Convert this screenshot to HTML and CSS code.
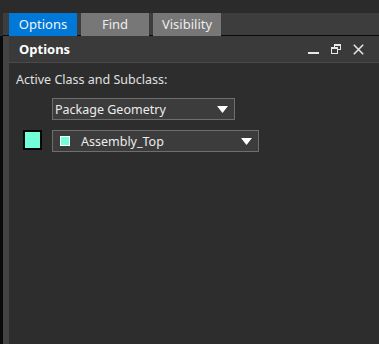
FILE: index.html
```html
<!DOCTYPE html>
<html>
<head>
<meta charset="utf-8">
<link rel="stylesheet" href="styles.css">
</head>
<body>
<div class="app">
  <div class="topgap"></div>
  <div class="tabrow">
    <div class="edge-top"></div>
    <div class="tabstrip">
      <div class="tab active">Options</div>
      <div class="tab">Find</div>
      <div class="tab">Visibility</div>
    </div>
  </div>
  <div class="bodyrow">
    <div class="edge-black"></div>
    <div class="edge-gray"></div>
    <div class="panel">
      <div class="header">
        <span class="title">Options</span>
        <div class="winbtns">
          <svg class="btn-min" width="11" height="11" viewBox="0 0 11 11"><rect x="0" y="8" width="11" height="2" fill="#e8e8e8"/></svg>
          <svg class="btn-restore" width="10" height="10" viewBox="0 0 10 10"><rect x="3.5" y="0.5" width="6" height="5" fill="none" stroke="#e8e8e8"/><rect x="0.5" y="3.5" width="6" height="6" fill="#3a3a3a" stroke="#e8e8e8"/><rect x="0" y="3" width="7" height="2" fill="#e8e8e8"/><rect x="3" y="0" width="7" height="2" fill="#e8e8e8"/></svg>
          <svg class="btn-close" width="11" height="11" viewBox="0 0 11 11"><path d="M0.8 0.8 L10.2 10.2 M10.2 0.8 L0.8 10.2" stroke="#e8e8e8" stroke-width="1.5"/></svg>
        </div>
      </div>
      <div class="content">
        <div class="label">Active Class and Subclass:</div>
        <div class="row1">
          <div class="combo combo1">
            <span class="ctext">Package Geometry</span>
            <svg class="arrow" width="11" height="7" viewBox="0 0 11 7"><path d="M0 0 H11 L5.5 7 Z" fill="#ffffff"/></svg>
          </div>
        </div>
        <div class="row2">
          <div class="swatch"></div>
          <div class="combo combo2">
            <span class="mini"></span>
            <span class="ctext ctext2">Assembly_Top</span>
            <svg class="arrow" width="11" height="7" viewBox="0 0 11 7"><path d="M0 0 H11 L5.5 7 Z" fill="#ffffff"/></svg>
          </div>
        </div>
      </div>
    </div>
  </div>
</div>
</body>
</html>
```
FILE: styles.css
```css
html, body {
  margin: 0;
  padding: 0;
  background: #2b2b2b;
}
body {
  width: 379px;
  height: 344px;
  overflow: hidden;
  font-family: "Noto Sans", "Open Sans", sans-serif;
}
.app {
  display: flex;
  flex-direction: column;
  width: 379px;
  height: 344px;
}
.topgap {
  height: 13px;
  background: #2b2b2b;
}
.tabrow {
  display: flex;
  height: 23px;
}
.edge-top {
  width: 3px;
  background: #2b2b2b;
}
.tabstrip {
  flex: 1;
  display: flex;
  gap: 4px;
  padding-left: 6px;
  background: #3d3d3d;
  border-bottom: 1px solid #0a0a0a;
  height: 22px;
}
.tab {
  width: 68px;
  height: 23px;
  background: #777777;
  color: #ececec;
  font-size: 13px;
  line-height: 23px;
  text-align: center;
}
.tab.active {
  background: #0078d7;
  color: #f4f4f4;
}
.bodyrow {
  flex: 1;
  display: flex;
}
.edge-black {
  width: 3px;
  background: #0a0a0a;
}
.edge-gray {
  width: 6px;
  background: #434343;
}
.panel {
  flex: 1;
  display: flex;
  flex-direction: column;
  background: #2d2d2d;
}
.header {
  height: 26px;
  background: #3a3a3a;
  border-bottom: 1px solid #4a4a4a;
  display: flex;
  align-items: center;
  padding-left: 10px;
  padding-right: 15px;
}
.title {
  color: #ffffff;
  font-weight: bold;
  font-size: 13px;
  flex: 1;
}
.winbtns {
  display: flex;
  align-items: center;
  gap: 12px;
}
.btn-min { margin-top: 1px; }
.content {
  padding: 9px 0 0 7px;
}
.label {
  color: #e0e0e0;
  font-size: 12.5px;
  line-height: 16px;
}
.row1 {
  padding-left: 36px;
  margin-top: 10px;
}
.row2 {
  display: flex;
  align-items: flex-start;
  margin-top: 10px;
  padding-left: 7px;
}
.combo {
  box-sizing: border-box;
  height: 22px;
  border: 1px solid #6e6e6e;
  background: #3c3c3c;
  display: flex;
  align-items: center;
  padding-left: 2px;
  padding-right: 6px;
}
.combo1 { width: 183px; }
.combo2 { width: 207px; margin-left: 10px; padding-left: 7px; }
.ctext {
  flex: 1;
  color: #ececec;
  font-size: 12.5px;
  white-space: nowrap;
}
.ctext2 { margin-left: 11px; }
.arrow { flex: none; }
.swatch {
  box-sizing: border-box;
  width: 19px;
  height: 20px;
  border: 2px solid #050505;
  background: #70ffd8;
}
.mini {
  box-sizing: border-box;
  width: 10px;
  height: 10px;
  border: 1px solid #ffffff;
  background: #70ffd8;
}
```
